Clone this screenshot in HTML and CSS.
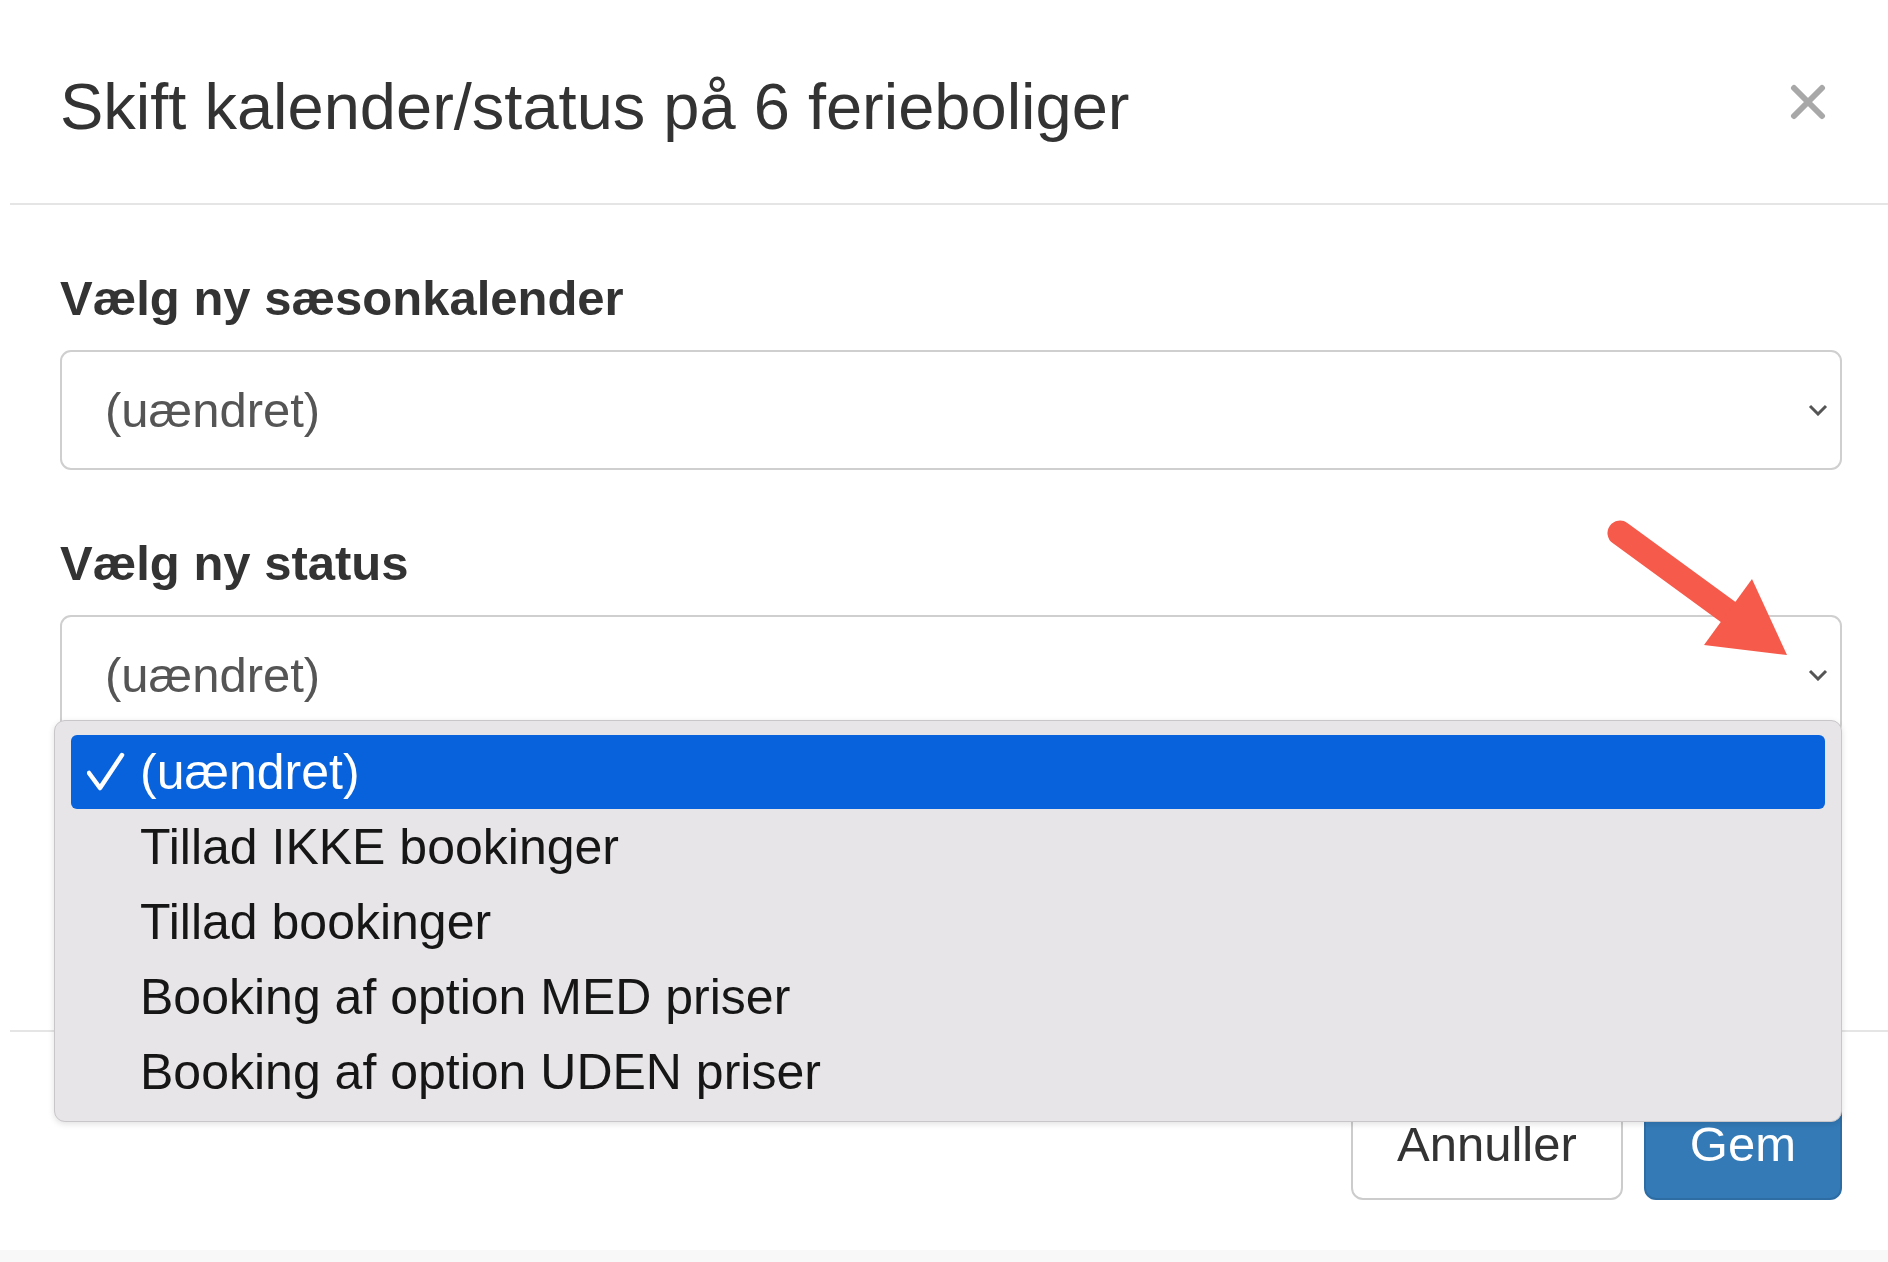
FILE: index.html
```html
<!DOCTYPE html>
<html lang="da">
<head>
<meta charset="utf-8">
<title>Skift kalender/status</title>
<link rel="stylesheet" href="styles.css">
</head>
<body>
<div class="page">
  <div class="modal">
    <div class="modal-header">
      <h4 class="modal-title">Skift kalender/status på 6 ferieboliger</h4>
      <button class="close" aria-label="Luk">
        <svg width="36" height="36" viewBox="0 0 36 36"><path d="M4 4 L32 32 M32 4 L4 32" stroke="#a8a8a8" stroke-width="6" stroke-linecap="round" fill="none"/></svg>
      </button>
    </div>
    <div class="modal-body">
      <div class="form-group">
        <label class="form-label">Vælg ny sæsonkalender</label>
        <div class="select">
          <span>(uændret)</span>
          <svg class="chev" width="20" height="12" viewBox="0 0 20 12"><polyline points="2,2 10,10 18,2" stroke="#555" stroke-width="3" fill="none"/></svg>
        </div>
      </div>
      <div class="form-group last">
        <label class="form-label">Vælg ny status</label>
        <div class="select-wrap">
          <div class="select">
            <span>(uændret)</span>
            <svg class="chev" width="20" height="12" viewBox="0 0 20 12"><polyline points="2,2 10,10 18,2" stroke="#555" stroke-width="3" fill="none"/></svg>
          </div>
          <ul class="menu">
            <li class="opt selected"><span class="tick"><svg width="40" height="40" viewBox="0 0 40 40"><polyline points="2,21 13,36 35,3" stroke="#fff" stroke-width="4.5" fill="none" stroke-linejoin="round" stroke-linecap="round"/></svg></span>(uændret)</li>
            <li class="opt"><span class="tick"></span>Tillad IKKE bookinger</li>
            <li class="opt"><span class="tick"></span>Tillad bookinger</li>
            <li class="opt"><span class="tick"></span>Booking af option MED priser</li>
            <li class="opt"><span class="tick"></span>Booking af option UDEN priser</li>
          </ul>
        </div>
      </div>
    </div>
    <div class="modal-footer">
      <button class="btn btn-default">Annuller</button>
      <button class="btn btn-primary">Gem</button>
    </div>
  </div>
  <svg class="arrow" width="220" height="180" viewBox="0 0 220 180">
    <line x1="30" y1="33" x2="145" y2="117" stroke="#f65a4b" stroke-width="25" stroke-linecap="round"/>
    <polygon points="162,79 197,155 114,145" fill="#f65a4b"/>
  </svg>
</div>
</body>
</html>
```
FILE: styles.css
```css
html, body {
  margin: 0;
  padding: 0;
  background: #fff;
}
body {
  font-family: "Liberation Sans", Arial, Helvetica, sans-serif;
  color: #333;
}
.page {
  position: relative;
  width: 1888px;
  height: 1262px;
  overflow: hidden;
  background: linear-gradient(to bottom, #fff 1250px, #f8f8f8 1250px);
}
.modal {
  margin-left: 10px;
  width: 1878px;
  height: 1250px;
  background: #fff;
  box-sizing: border-box;
}
.modal-header {
  display: flex;
  justify-content: space-between;
  align-items: flex-start;
  padding: 60px 62px 50px 50px;
  border-bottom: 2px solid #e5e5e5;
}
.modal-title {
  margin: 0;
  font-size: 65px;
  line-height: 93px;
  font-weight: normal;
  color: #333;
}
.close {
  margin-top: 24px;
  width: 36px;
  height: 36px;
  padding: 0;
  border: 0;
  background: transparent;
  display: flex;
}
.modal-body {
  padding: 58px 46px 295px 50px;
}
.form-group {
  display: flex;
  flex-direction: column;
  margin-bottom: 58px;
}
.form-group.last {
  margin-bottom: 0;
}
.form-label {
  font-size: 49px;
  line-height: 70px;
  font-weight: bold;
  color: #333;
  margin-bottom: 17px;
}
.select-wrap {
  position: relative;
}
.select {
  height: 120px;
  box-sizing: border-box;
  border: 2px solid #cfcfcf;
  border-radius: 11px;
  display: flex;
  align-items: center;
  justify-content: space-between;
  padding: 0 12px 0 43px;
  font-size: 49px;
  color: #555;
  background: #fff;
}
.chev {
  display: block;
}
.menu {
  position: absolute;
  left: -6px;
  right: 0;
  top: 105px;
  margin: 0;
  padding: 14px 16px 12px 16px;
  list-style: none;
  background: #e8e5e8;
  border: 1px solid #c9c6c9;
  border-radius: 11px;
  box-shadow: 0 2px 6px rgba(0, 0, 0, 0.12);
  z-index: 5;
}
.opt {
  display: flex;
  align-items: center;
  height: 75px;
  font-size: 50px;
  color: #161616;
  border-radius: 6px;
}
.opt.selected {
  height: 74px;
  background: #0862dc;
  color: #fff;
}
.tick {
  width: 69px;
  flex: none;
  display: flex;
  align-items: center;
  padding-left: 16px;
  box-sizing: border-box;
}
.tick svg {
  display: block;
}
.modal-footer {
  border-top: 2px solid #e5e5e5;
  padding: 49px 46px 50px 50px;
  display: flex;
  justify-content: flex-end;
  gap: 21px;
}
.btn {
  height: 119px;
  box-sizing: border-box;
  font-family: "Liberation Sans", Arial, sans-serif;
  font-size: 49px;
  padding: 6px 44px 0 44px;
  border-radius: 12px;
  border: 2px solid #cccccc;
  display: flex;
  align-items: center;
}
.btn-default {
  background: #fff;
  color: #333;
}
.btn-primary {
  background: #337ab7;
  border-color: #2e6da4;
  color: #fff;
}
.arrow {
  position: absolute;
  left: 1590px;
  top: 500px;
  z-index: 10;
}
```
